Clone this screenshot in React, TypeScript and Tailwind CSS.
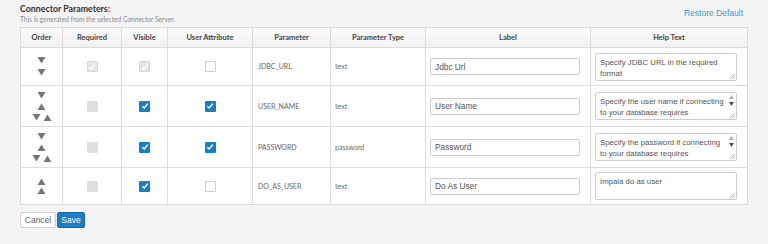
import React from 'react';

type Arrow = 'up' | 'down';

interface Param {
  order: Arrow[][];
  required: 'checked' | 'off';
  visible: boolean;
  userAttr: boolean;
  name: string;
  type: string;
  label: string;
  help: string;
  scroll: boolean;
  gap: string;
}

const params: Param[] = [
  {
    order: [['down'], ['down']],
    required: 'checked',
    visible: true,
    userAttr: false,
    name: 'JDBC_URL',
    type: 'text',
    label: 'Jdbc Url',
    help: 'Specify JDBC URL in the required format',
    scroll: false,
    gap: 'gap-[5px]',
  },
  {
    order: [['down'], ['up'], ['down', 'up']],
    required: 'off',
    visible: true,
    userAttr: true,
    name: 'USER_NAME',
    type: 'text',
    label: 'User Name',
    help: 'Specify the user name if connecting to your database requires authentication',
    scroll: true,
    gap: 'gap-[4px]',
  },
  {
    order: [['down'], ['up'], ['down', 'up']],
    required: 'off',
    visible: true,
    userAttr: true,
    name: 'PASSWORD',
    type: 'password',
    label: 'Password',
    help: 'Specify the password if connecting to your database requires authentication',
    scroll: true,
    gap: 'gap-[4px]',
  },
  {
    order: [['up'], ['up']],
    required: 'off',
    visible: true,
    userAttr: false,
    name: 'DO_AS_USER',
    type: 'text',
    label: 'Do As User',
    help: 'Impala do as user',
    scroll: false,
    gap: 'gap-[2px]',
  },
];

const rowHeights = ['h-[38px]', 'h-[41px]', 'h-[41px]', 'h-[37px]'];

function Triangle({ dir }: { dir: Arrow }) {
  return (
    <svg width="9" height="7" viewBox="0 0 9 7" className="block">
      {dir === 'down' ? (
        <polygon points="0.5,0 8.5,0 4.5,6.5" fill="#757575" />
      ) : (
        <polygon points="0.5,7 8.5,7 4.5,0.5" fill="#757575" />
      )}
    </svg>
  );
}

function Check({ kind }: { kind: 'blue' | 'grayChecked' | 'grayOff' | 'empty' }) {
  if (kind === 'blue') {
    return (
      <span className="mx-auto flex h-[11px] w-[11px] items-center justify-center rounded-[1px] bg-[#1b7dc2]">
        <svg width="8" height="8" viewBox="0 0 8 8">
          <path d="M1.3 4.2 L3.2 6 L6.8 1.6" stroke="#fff" strokeWidth="1.5" fill="none" />
        </svg>
      </span>
    );
  }
  if (kind === 'grayChecked') {
    return (
      <span className="mx-auto flex h-[11px] w-[11px] items-center justify-center rounded-[1px] border border-[#d6d6d6] bg-[#e6e6e6]">
        <svg width="8" height="8" viewBox="0 0 8 8">
          <path d="M1.3 4.2 L3.2 6 L6.8 1.6" stroke="#fff" strokeWidth="1.4" fill="none" />
        </svg>
      </span>
    );
  }
  if (kind === 'grayOff') {
    return <span className="mx-auto block h-[11px] w-[11px] rounded-[1px] bg-[#dedede]" />;
  }
  return <span className="mx-auto block h-[11px] w-[11px] rounded-[1px] border border-[#cfcfcf] bg-white" />;
}

export default function App() {
  return (
    <div
      className="min-h-[244px] w-[768px] bg-[#f4f4f4] px-[20px] pt-[3px]"
      style={{ fontFamily: 'Lato, "Liberation Sans", sans-serif' }}
    >
      <div className="flex items-start justify-between">
        <div>
          <div className="text-[8.8px] font-bold leading-[11px] text-[#333]">Connector Parameters:</div>
          <div className="mt-[1px] text-[6.6px] leading-[9px] text-[#8a8a8a]">
            This is generated from the selected Connector Server.
          </div>
        </div>
        <a
          className="mr-[5px] mt-[5px] text-[8.5px] leading-[11px] text-[#3a9dc6]"
          style={{ fontFamily: '"Liberation Sans", Arial, sans-serif' }}
        >
          Restore Default
        </a>
      </div>

      <table className="mt-[3px] w-[727px] table-fixed border-collapse border border-[#dcdcdc] bg-white">
        <colgroup>
          <col className="w-[42px]" />
          <col className="w-[59px]" />
          <col className="w-[46px]" />
          <col className="w-[85px]" />
          <col className="w-[78px]" />
          <col className="w-[95px]" />
          <col className="w-[165px]" />
          <col className="w-[157px]" />
        </colgroup>
        <thead>
          <tr className="h-[20px] bg-gradient-to-b from-[#fbfbfb] to-[#f1f1f1]">
            {['Order', 'Required', 'Visible', 'User Attribute', 'Parameter', 'Parameter Type', 'Label', 'Help Text'].map(
              (h) => (
                <th
                  key={h}
                  className="border border-[#dcdcdc] p-0 text-center text-[7.5px] font-bold text-[#444]"
                >
                  {h}
                </th>
              ),
            )}
          </tr>
        </thead>
        <tbody>
          {params.map((p, i) => (
            <tr key={p.name} className={rowHeights[i]}>
              <td className="border border-[#dcdcdc] p-0 align-middle">
                <div className={`flex flex-col items-center ${p.gap}`}>
                  {p.order.map((group, j) => (
                    <div key={j} className="flex gap-[2px]">
                      {group.map((d, k) => (
                        <Triangle key={k} dir={d} />
                      ))}
                    </div>
                  ))}
                </div>
              </td>
              <td className="border border-[#dcdcdc] p-0 align-middle">
                <Check kind={p.required === 'checked' ? 'grayChecked' : 'grayOff'} />
              </td>
              <td className="border border-[#dcdcdc] p-0 align-middle">
                <Check kind={i === 0 ? 'grayChecked' : 'blue'} />
              </td>
              <td className="border border-[#dcdcdc] p-0 align-middle">
                <Check kind={p.userAttr ? 'blue' : 'empty'} />
              </td>
              <td className="border border-[#dcdcdc] py-0 pl-[5px] text-[7px] text-[#666]">{p.name}</td>
              <td className="border border-[#dcdcdc] py-0 pl-[4px] text-[7px] text-[#666]">{p.type}</td>
              <td className="border border-[#dcdcdc] p-0 align-middle">
                <input
                  readOnly
                  value={p.label}
                  className="ml-[4px] block h-[17px] w-[150px] rounded-[2px] border border-[#cccccc] bg-white px-[4px] text-[8.3px] text-[#555] outline-none"
                  style={{ fontFamily: '"Liberation Sans", Arial, sans-serif' }}
                />
              </td>
              <td className="border border-[#dcdcdc] p-0 align-middle">
                <div className="relative ml-[4px] h-[28px] w-[142px] overflow-hidden rounded-[2px] border border-[#cccccc] bg-white">
                  <textarea
                    readOnly
                    value={p.help}
                    className="block h-[25px] w-[132px] resize-none overflow-hidden border-0 bg-white pb-0 pl-[4px] pr-0 pt-[3px] text-[7.8px] leading-[11px] text-[#555] outline-none"
                    style={{ fontFamily: '"Liberation Sans", Arial, sans-serif' }}
                  />
                  {p.scroll && (
                    <div className="absolute right-[2px] top-[2px] flex flex-col items-center gap-[3px]">
                      <svg width="5" height="4" viewBox="0 0 5 4">
                        <polygon points="0,4 5,4 2.5,0" fill="#b0b0b0" />
                      </svg>
                      <svg width="5" height="4" viewBox="0 0 5 4">
                        <polygon points="0,0 5,0 2.5,4" fill="#505050" />
                      </svg>
                    </div>
                  )}
                  <svg width="6" height="6" viewBox="0 0 6 6" className="absolute bottom-[1px] right-[1px]">
                    <path d="M6 1 L1 6 M6 3.5 L3.5 6" stroke="#a0a0a0" strokeWidth="0.8" />
                  </svg>
                </div>
              </td>
            </tr>
          ))}
        </tbody>
      </table>

      <div
        className="mt-[7px] flex gap-[1px]"
        style={{ fontFamily: '"Liberation Sans", Arial, sans-serif' }}
      >
        <button className="h-[16px] w-[36px] rounded-[2px] border border-[#cfcfcf] bg-white text-[8.5px] text-[#666]">
          Cancel
        </button>
        <button className="h-[16px] w-[28px] rounded-[2px] border border-[#1668a8] bg-[#1c7dc1] text-[8.5px] text-white">
          Save
        </button>
      </div>
    </div>
  );
}
